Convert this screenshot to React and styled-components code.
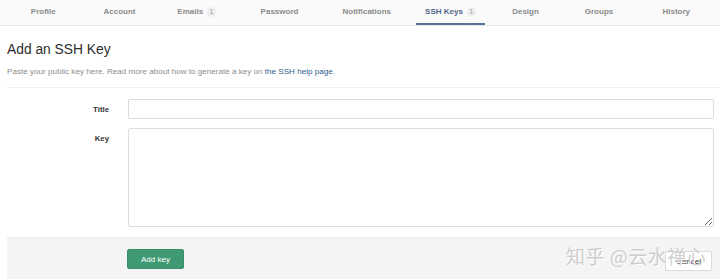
import React from 'react';
import styled, { createGlobalStyle } from 'styled-components';

const GlobalStyle = createGlobalStyle`
    html, body {
        margin: 0;
        padding: 0;
        background: #fff;
        font-family: "Liberation Sans", Arial, sans-serif;
        color: #333;
    }
`;

const Page = styled.div`
    position: relative;
    width: 720px;
    height: 279px;
    overflow: hidden;
`;

const Nav = styled.div`
    display: flex;
    height: 25px;
    padding-left: 5px;
    background: #fafafa;
    border-bottom: 1px solid #e7e7e7;
`;

const Tab = styled.div`
    width: ${props => props.width}px;
    display: flex;
    justify-content: center;
`;

const TabLabel = styled.div`
    display: flex;
    align-items: center;
    gap: 4px;
    padding: 0 9px;
    height: 100%;
    box-sizing: border-box;
    font-size: 8px;
    font-weight: bold;
    color: ${props => props.active ? '#4f6787' : '#8a8a8a'};
    border-bottom: 2px solid ${props => props.active ? '#55729a' : 'transparent'};
    margin-bottom: -1px;
`;

const Badge = styled.span`
    display: inline-block;
    min-width: 9px;
    height: 10px;
    line-height: 10px;
    border-radius: 5px;
    background: #eeeeee;
    color: #999;
    font-size: 6.5px;
    font-weight: normal;
    text-align: center;
`;

const Content = styled.div`
    padding-left: 7px;
`;

const Heading = styled.h3`
    margin: 0;
    padding-top: 15px;
    font-size: 13.8px;
    font-weight: normal;
    line-height: 18px;
    color: #2e2e2e;
`;

const Lead = styled.p`
    margin: 8px 0 0;
    font-size: 8.1px;
    line-height: 10px;
    color: #8c8c8c;
    padding-bottom: 10px;
    border-bottom: 1px solid #efefef;

    a {
        color: #2d5c8d;
        text-decoration: none;
    }
`;

const Form = styled.div`
    padding: 11px 6px 0 0;
    display: grid;
    grid-template-columns: 121px 1fr;
    row-gap: 9px;
`;

const Label = styled.label`
    font-size: 7.8px;
    font-weight: bold;
    color: #333;
    text-align: right;
    padding-right: 19px;
    padding-top: ${props => props.top}px;
`;

const Input = styled.input`
    box-sizing: border-box;
    width: 100%;
    height: 20px;
    border: 1px solid #dcdcdc;
    border-radius: 2px;
    margin: 0;
    background: #fff;
`;

const TextArea = styled.textarea`
    box-sizing: border-box;
    width: 100%;
    height: 99px;
    border: 1px solid #dcdcdc;
    border-radius: 2px;
    margin: 0;
    display: block;
    background: #fff;
`;

const Footer = styled.div`
    margin-top: 10px;
    height: 50px;
    background: #f4f4f4;
    border-top: 1px solid #ededed;
    display: flex;
    align-items: flex-start;
    padding: 11px 8px 0 120px;
`;

const Button = styled.button`
    box-sizing: border-box;
    height: 20px;
    padding: 0 ${props => props.pad}px;
    border-radius: 2px;
    font-family: "Liberation Sans", Arial, sans-serif;
    font-size: 8px;
    cursor: pointer;
    background: ${props => props.primary ? '#3f9a74' : '#fff'};
    color: ${props => props.primary ? '#fff' : '#333'};
    border: 1px solid ${props => props.primary ? '#3a8f6b' : '#dadada'};
    margin-left: ${props => props.push ? 'auto' : '0'};
    margin-top: ${props => props.push ? '2px' : '0'};
`;

const Watermark = styled.div`
    position: absolute;
    left: 566px;
    top: 242px;
    font-family: "Noto Sans CJK SC", "Liberation Sans", sans-serif;
    font-size: 19px;
    color: rgba(175, 175, 175, 0.6);
    text-shadow: 1px 1px 0 rgba(255, 255, 255, 0.9);
    letter-spacing: 0.5px;
    pointer-events: none;
`;

const tabs = [
    { name: 'Profile', width: 76.5 },
    { name: 'Account', width: 76 },
    { name: 'Emails', width: 78.5, badge: '1' },
    { name: 'Password', width: 87 },
    { name: 'Notifications', width: 87.5 },
    { name: 'SSH Keys', width: 80, badge: '1', active: true },
    { name: 'Design', width: 70 },
    { name: 'Groups', width: 77 },
    { name: 'History', width: 77.5 },
];

const App = () => {
    return (
        <Page>
            <GlobalStyle />
            <Nav>
                {tabs.map(tab => (
                    <Tab key={tab.name} width={tab.width}>
                        <TabLabel active={tab.active}>
                            {tab.name}
                            {tab.badge && <Badge>{tab.badge}</Badge>}
                        </TabLabel>
                    </Tab>
                ))}
            </Nav>
            <Content>
                <Heading>Add an SSH Key</Heading>
                <Lead>
                    Paste your public key here. Read more about how to generate a key on <a href="#">the SSH help page</a>.
                </Lead>
                <Form>
                    <Label top={6}>Title</Label>
                    <Input type="text" />
                    <Label top={6}>Key</Label>
                    <TextArea />
                </Form>
                <Footer>
                    <Button primary pad={13}>Add key</Button>
                    <Button push pad={10}>Cancel</Button>
                </Footer>
            </Content>
            <Watermark>知乎 @云水禅心</Watermark>
        </Page>
    );
};

export default App;
